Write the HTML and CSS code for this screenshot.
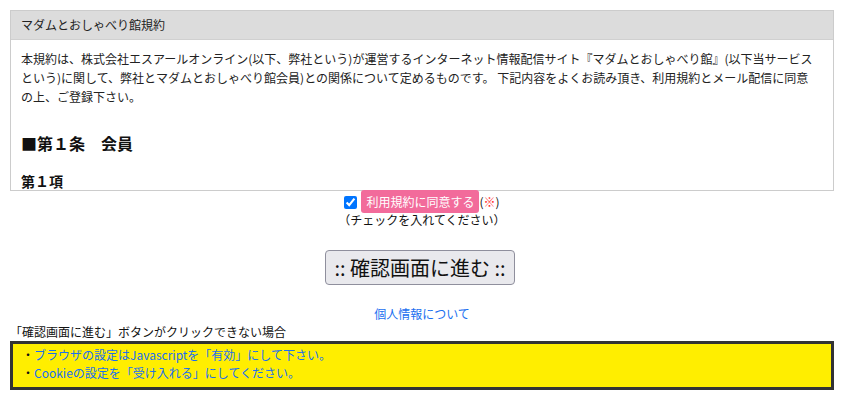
FILE: index.html
```html
<!DOCTYPE html>
<html lang="ja">
<head>
<meta charset="utf-8">
<title>マダムとおしゃべり館規約</title>
<link rel="stylesheet" href="styles.css">
</head>
<body>
<div class="page">
  <section class="terms">
    <div class="terms-head">マダムとおしゃべり館規約</div>
    <div class="terms-body">
      <p class="intro">本規約は、株式会社エスアールオンライン(以下、弊社という)が運営するインターネット情報配信サイト『マダムとおしゃべり館』(以下当サービスという)に関して、弊社とマダムとおしゃべり館会員)との関係について定めるものです。 下記内容をよくお読み頂き、利用規約とメール配信に同意の上、ご登録下さい。</p>
      <h2 class="article">■第１条　会員</h2>
      <h3 class="clause">第１項</h3>
    </div>
  </section>

  <div class="agree">
    <div class="agree-row"><input type="checkbox" class="check" checked><span class="agree-label">利用規約に同意する</span>(<span class="req">※</span>)</div>
    <div>（チェックを入れてください）</div>
  </div>

  <div class="submit-wrap">
    <button type="button" class="submit">:: 確認画面に進む ::</button>
  </div>

  <div class="privacy"><a href="#" class="link">個人情報について</a></div>

  <div class="note">「確認画面に進む」ボタンがクリックできない場合</div>
  <div class="notice">
    <div><span class="dot">・</span><a href="#" class="link">ブラウザの設定はJavascriptを「有効」にして下さい。</a></div>
    <div><span class="dot">・</span><a href="#" class="link">Cookieの設定を「受け入れる」にしてください。</a></div>
  </div>
</div>
</body>
</html>
```
FILE: styles.css
```css
html, body {
  margin: 0;
  padding: 0;
  background: #fff;
}
body {
  font-family: "Noto Sans CJK JP", "Noto Sans", sans-serif;
  font-size: 12px;
  line-height: 18px;
  color: #222;
}
.page {
  padding: 10px;
}
.terms {
  box-sizing: border-box;
  height: 181px;
  border: 1px solid #cccccc;
  overflow: hidden;
}
.terms-head {
  background: #dcdcdc;
  padding: 5px 10px;
  height: 18px;
  line-height: 18px;
  color: #222;
}
.terms-body {
  padding: 9px 14px 0 10px;
  border-top: 1px solid #d0d0d0;
}
.intro {
  margin: 0;
  line-height: 19px;
}
.article {
  margin: 25px 0 0;
  font-size: 16px;
  line-height: 24px;
  font-weight: bold;
  color: #111;
}
.clause {
  margin: 16px 0 0;
  font-size: 14px;
  line-height: 20px;
  font-weight: bold;
  color: #111;
}
.agree {
  margin-top: 2px;
  text-align: center;
  line-height: 18px;
  color: #111;
}
.agree-row {
  white-space: nowrap;
}
.check {
  width: 13px;
  height: 13px;
  margin: 0 4px 0 0;
  vertical-align: -2px;
}
.agree-label {
  background: #f26b9b;
  color: #fff;
  padding: 3px 5px;
  border-radius: 3px;
}
.req {
  color: #ff2a2a;
}
.submit-wrap {
  margin-top: 21px;
  display: flex;
  justify-content: center;
}
.submit {
  box-sizing: border-box;
  height: 35px;
  padding: 0 8px;
  font-family: "Noto Sans CJK JP", "Noto Sans", sans-serif;
  font-size: 20px;
  line-height: 33px;
  color: #111;
  background: #e9e9ed;
  border: 1px solid #8f8f9d;
  border-radius: 4px;
  margin-left: -4px;
}
.privacy {
  margin-top: 20px;
  text-align: center;
}
.link {
  color: #1a6ff0;
  text-decoration: none;
}
.note {
  color: #111;
}
.notice {
  background: #ffee00;
  border: 3px solid #333333;
  padding: 2px 9px 5px;
  line-height: 18px;
}
.dot {
  color: #111;
}
```
